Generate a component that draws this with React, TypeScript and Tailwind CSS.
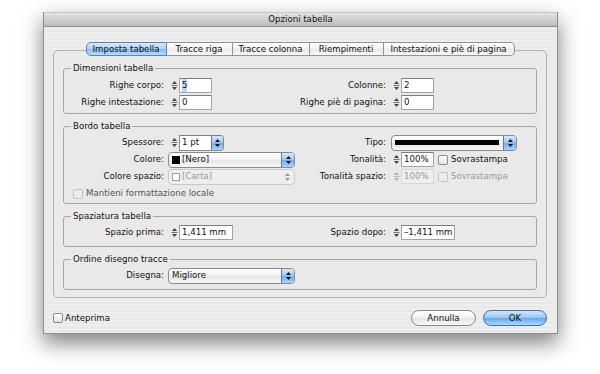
import React from 'react';

const Spinner = ({ disabled = false }: { disabled?: boolean }) => (
  <div className="flex w-[8px] items-center justify-center">
    <svg width="7" height="11" viewBox="0 0 7 11">
      <path d="M3.5 1 L6 4 H1 Z" fill={disabled ? '#b0b0b0' : '#444'} />
      <rect x="0.5" y="5" width="6" height="0.8" fill={disabled ? '#b0b0b0' : '#555'} />
      <path d="M1 7 H6 L3.5 10 Z" fill={disabled ? '#b0b0b0' : '#444'} />
    </svg>
  </div>
);

const Arrows = ({ disabled = false }: { disabled?: boolean }) => (
  <svg width="7" height="10" viewBox="0 0 7 10">
    <path d="M3.5 1 L6 4 H1 Z" fill={disabled ? '#9a9a9a' : '#111'} />
    <path d="M1 6 H6 L3.5 9 Z" fill={disabled ? '#9a9a9a' : '#111'} />
  </svg>
);

const Field = ({ children, className = '', disabled = false }: { children: React.ReactNode; className?: string; disabled?: boolean }) => (
  <div
    className={`ml-[1px] flex h-[15px] items-center overflow-hidden whitespace-nowrap border px-[2px] ${
      disabled ? 'border-[#d6d6d6] bg-[#efefef] text-[#9a9a9a]' : 'border-[#a3a3a3] border-t-[#7c7c7c] bg-white'
    } ${className}`}
  >
    {children}
  </div>
);

const Popup = ({ children, className = '', disabled = false }: { children: React.ReactNode; className?: string; disabled?: boolean }) => (
  <div
    className={`flex h-[16px] items-stretch overflow-hidden rounded-[4px] border ${
      disabled ? 'border-[#c9c9c9] bg-[#eeeeee] text-[#9a9a9a]' : 'border-[#8a8a8a] bg-[linear-gradient(#ffffff,#f1f1f1_50%,#e6e6e6_51%,#f6f6f6)]'
    } ${className}`}
  >
    <div className="flex flex-1 items-center whitespace-nowrap px-[3px]">{children}</div>
    <div
      className={`flex w-[13px] items-center justify-center ${
        disabled ? '' : 'border-l border-[#5b7fb0] bg-[linear-gradient(#d5e8fc,#9cc7f3_50%,#73acee_51%,#a8d2fb)]'
      }`}
    >
      <Arrows disabled={disabled} />
    </div>
  </div>
);

const Check = ({ disabled = false }: { disabled?: boolean }) => (
  <div
    className={`h-[10px] w-[10px] rounded-[2px] border ${
      disabled ? 'border-[#c4c4c4] bg-[#ececec]' : 'border-[#8a8a8a] bg-[linear-gradient(#ffffff,#e2e2e2)]'
    }`}
  />
);

const Row = ({ children, className = '' }: { children: React.ReactNode; className?: string }) => (
  <div className={`flex h-[17px] items-center whitespace-nowrap ${className}`}>{children}</div>
);

const Label = ({ children, right = false }: { children: React.ReactNode; right?: boolean }) => (
  <div className={`${right ? 'w-[86px]' : 'w-[100px]'} whitespace-nowrap text-right`}>{children}</div>
);

const Group = ({ title, children, className = '' }: { title: string; children: React.ReactNode; className?: string }) => (
  <fieldset className={`mx-[9px] mt-[6px] rounded-[3px] border border-[#a7a7a7] bg-[#e9e9e9] ${className}`}>
    <legend className="ml-[7px] px-[2px] leading-[12px]">{title}</legend>
    {children}
  </fieldset>
);

const tabs = [
  { label: 'Imposta tabella', w: 'w-[81px]' },
  { label: 'Tracce riga', w: 'w-[66px]' },
  { label: 'Tracce colonna', w: 'w-[77px]' },
  { label: 'Riempimenti', w: 'w-[74px]' },
  { label: 'Intestazioni e piè di pagina', w: 'w-[131px]' },
];

export default function App() {
  return (
    <div className="h-[374px] w-[600px] bg-white pl-[43px] pt-[12px] font-['DejaVu_Sans',sans-serif] text-[8.6px] text-[#111111]">
      <div className="flex h-[322px] w-[515px] flex-col border-x border-b border-[#8c8c8c] bg-[repeating-linear-gradient(180deg,#eeeeee_0px,#eeeeee_2px,#e9e9e9_2px,#e9e9e9_4px)] shadow-[0_9px_20px_rgba(0,0,0,0.5)]">
        <div className="flex h-[15px] items-center justify-center border-b border-t border-b-[#8e8e8e] border-t-[#c8c8c8] bg-[linear-gradient(#e2e2e2,#bcbcbc)]">
          Opzioni tabella
        </div>

        <div className="ml-[9px] mt-[23px] h-[248px] w-[494px] rounded-[5px] border border-[#b3b3b3] bg-[#eaeaea]">
          <div className="-mt-[9px] flex h-[14px] justify-center">
            {tabs.map((t, i) => (
              <div
                key={t.label}
                className={`flex ${t.w} items-center justify-center whitespace-nowrap border-y border-r ${i === 0 ? 'rounded-l-[5px] border-l' : ''} ${
                  i === tabs.length - 1 ? 'rounded-r-[5px]' : ''
                } ${
                  i === 0
                    ? 'border-[#5e82b4] bg-[linear-gradient(#d8eafc,#a9cff5_50%,#86bcf2_51%,#b8dcfd)]'
                    : 'border-[#939393] bg-[linear-gradient(#ffffff,#f3f3f3_50%,#e9e9e9_51%,#f7f7f7)]'
                }`}
              >
                {t.label}
              </div>
            ))}
          </div>

          <Group title="Dimensioni tabella" className="pb-[2px] pt-[3px]">
            <Row>
              <Label>Righe corpo:</Label>
              <div className="flex w-[136px] items-center pl-[6px]">
                <Spinner />
                <Field className="w-[33px]">
                  <span className="bg-[#b5d5ff]">5</span>
                </Field>
              </div>
              <Label right>Colonne:</Label>
              <div className="flex items-center pl-[6px]">
                <Spinner />
                <Field className="w-[33px]">2</Field>
              </div>
            </Row>
            <Row>
              <Label>Righe intestazione:</Label>
              <div className="flex w-[136px] items-center pl-[6px]">
                <Spinner />
                <Field className="w-[33px]">0</Field>
              </div>
              <Label right>Righe piè di pagina:</Label>
              <div className="flex items-center pl-[6px]">
                <Spinner />
                <Field className="w-[33px]">0</Field>
              </div>
            </Row>
          </Group>

          <Group title="Bordo tabella" className="pb-[1px] pt-[2px]">
            <Row>
              <Label>Spessore:</Label>
              <div className="flex w-[136px] items-center pl-[6px]">
                <Spinner />
                <div className="ml-[1px] flex h-[16px] w-[45px] items-stretch overflow-hidden rounded-r-[4px] border border-[#8a8a8a] border-t-[#7c7c7c] bg-white">
                  <div className="flex flex-1 items-center px-[2px]">1 pt</div>
                  <div className="flex w-[12px] items-center justify-center border-l border-[#5b7fb0] bg-[linear-gradient(#d5e8fc,#9cc7f3_50%,#73acee_51%,#a8d2fb)]">
                    <Arrows />
                  </div>
                </div>
              </div>
              <Label right>Tipo:</Label>
              <div className="flex items-center pl-[5px]">
                <Popup className="w-[126px]">
                  <div className="h-[5px] w-[104px] bg-black" />
                </Popup>
              </div>
            </Row>
            <Row>
              <Label>Colore:</Label>
              <div className="flex w-[136px] items-center pl-[4px]">
                <Popup className="w-[127px]">
                  <div className="mr-[2px] h-[8px] w-[8px] bg-black" />
                  [Nero]
                </Popup>
              </div>
              <Label right>Tonalità:</Label>
              <div className="flex items-center pl-[6px]">
                <Spinner />
                <Field className="w-[33px]">100%</Field>
                <div className="ml-[4px]">
                  <Check />
                </div>
                <span className="ml-[3px]">Sovrastampa</span>
              </div>
            </Row>
            <Row>
              <Label>Colore spazio:</Label>
              <div className="flex w-[136px] items-center pl-[4px]">
                <Popup disabled className="w-[127px]">
                  <div className="mr-[2px] h-[8px] w-[8px] border border-[#9a9a9a] bg-white" />
                  [Carta]
                </Popup>
              </div>
              <Label right>Tonalità spazio:</Label>
              <div className="flex items-center pl-[6px] text-[#9a9a9a]">
                <Spinner disabled />
                <Field disabled className="w-[33px]">
                  100%
                </Field>
                <div className="ml-[4px]">
                  <Check disabled />
                </div>
                <span className="ml-[3px]">Sovrastampa</span>
              </div>
            </Row>
            <Row className="pl-[9px]">
              <Check disabled />
              <span className="ml-[3px] text-[#555555]">Mantieni formattazione locale</span>
            </Row>
          </Group>

          <Group title="Spaziatura tabella" className="pb-[5px] pt-[2px]">
            <Row>
              <Label>Spazio prima:</Label>
              <div className="flex w-[136px] items-center pl-[6px]">
                <Spinner />
                <Field className="w-[54px]">1,411 mm</Field>
              </div>
              <Label right>Spazio dopo:</Label>
              <div className="flex items-center pl-[6px]">
                <Spinner />
                <Field className="w-[54px]">–1,411 mm</Field>
              </div>
            </Row>
          </Group>

          <Group title="Ordine disegno tracce" className="pb-[5px] pt-[2px]">
            <Row>
              <Label>Disegna:</Label>
              <div className="flex w-[136px] items-center pl-[4px]">
                <Popup className="w-[127px]">Migliore</Popup>
              </div>
            </Row>
          </Group>
        </div>

        <div className="ml-[9px] mr-[10px] mt-[12px] flex h-[16px] items-center justify-between">
          <div className="flex items-center">
            <Check />
            <span className="ml-[2px]">Anteprima</span>
          </div>
          <div className="flex items-center gap-[7px]">
            <div className="flex h-[16px] w-[65px] items-center justify-center rounded-full border border-[#8a8a8a] bg-[linear-gradient(#ffffff,#f2f2f2_50%,#e4e4e4_51%,#f8f8f8)]">
              Annulla
            </div>
            <div className="flex h-[16px] w-[64px] items-center justify-center rounded-full border border-[#4a6ea6] bg-[linear-gradient(#d3e7fc,#95c5f3_50%,#62a6ee_51%,#a9d8fd)]">
              OK
            </div>
          </div>
        </div>
      </div>
    </div>
  );
}
